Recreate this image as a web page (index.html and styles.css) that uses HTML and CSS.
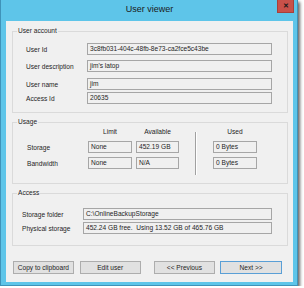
FILE: index.html
```html
<!DOCTYPE html>
<html lang="en">
<head>
    <meta charset="UTF-8">
    <title>User viewer</title>
    <link rel="stylesheet" href="styles.css">
</head>
<body>
    <div class="window">
        <div class="titlebar">
            <span class="title">User viewer</span>
            <span class="close">&#x2715;</span>
        </div>
        <div class="client">
            <!-- User account -->
            <fieldset class="group group-account">
                <legend>User account</legend>
                <div class="rows">
                    <div class="row"><span class="label">User Id</span><span class="field">3c8fb031-404c-48fb-8e73-ca2fce5c43be</span></div>
                    <div class="row"><span class="label">User description</span><span class="field">jim's latop</span></div>
                    <div class="row row-loose"><span class="label">User name</span><span class="field">jim</span></div>
                    <div class="row row-tight"><span class="label">Access Id</span><span class="field">20635</span></div>
                </div>
            </fieldset>
            <!-- Usage -->
            <fieldset class="group group-usage">
                <legend>Usage</legend>
                <div class="usage">
                    <span></span>
                    <span class="head">Limit</span>
                    <span class="head">Available</span>
                    <span class="sep"></span>
                    <span class="head">Used</span>
                    <span class="label">Storage</span>
                    <span class="field">None</span>
                    <span class="field">452.19 GB</span>
                    <span class="field">0 Bytes</span>
                    <span class="label">Bandwidth</span>
                    <span class="field">None</span>
                    <span class="field">N/A</span>
                    <span class="field">0 Bytes</span>
                </div>
            </fieldset>
            <!-- Access -->
            <fieldset class="group group-access">
                <legend>Access</legend>
                <div class="rows access">
                    <div class="row"><span class="label">Storage folder</span><span class="field">C:\OnlineBackupStorage</span></div>
                    <div class="row row-tight"><span class="label">Physical storage</span><span class="field">452.24 GB free.&nbsp; Using 13.52 GB of 465.76 GB</span></div>
                </div>
            </fieldset>
            <div class="buttons">
                <button class="btn">Copy to clipboard</button>
                <button class="btn">Edit user</button>
                <button class="btn btn-wide">&lt;&lt; Previous</button>
                <button class="btn btn-default">Next &gt;&gt;</button>
            </div>
        </div>
    </div>
</body>
</html>
```

FILE: styles.css
```css
body {
    margin: 0;
    background-color: #fff;
    font-family: "Liberation Sans", Arial, sans-serif;
    font-size: 6.6px;
    color: #1e1e1e;
}
.window {
    width: 298px;
    height: 286px;
    box-sizing: border-box;
    border: 1px solid #3f93b9;
    border-top: none;
    padding: 0 4px 3px 5px;
    background-color: #5ec5e9;
    box-shadow: 2px 2px 3px rgba(0, 0, 0, 0.6);
}
.titlebar {
    position: relative;
    height: 21px;
    text-align: center;
}
.title {
    display: inline-block;
    padding-top: 4px;
    font-size: 9px;
    color: #1a1a1a;
}
.close {
    position: absolute;
    top: 0;
    right: -1px;
    width: 17px;
    height: 13px;
    box-sizing: border-box;
    background-color: #c8514a;
    border: 1px solid #a8403a;
    border-top: none;
    color: #1a1a1a;
    font-size: 7px;
    font-weight: bold;
    line-height: 12px;
    text-align: center;
}
.client {
    height: 261px;
    box-sizing: border-box;
    background-color: #f0f0f0;
    padding: 6px 5px 0 6px;
    display: flex;
    flex-direction: column;
    gap: 5px;
}
.group {
    margin: 0;
    padding: 0;
    border: 1px solid #dadada;
    box-sizing: border-box;
    min-width: 0;
}
.group legend {
    margin-left: 4px;
    padding: 0 1px;
    line-height: 8px;
}
.group-account {
    height: 86px;
}
.group-usage {
    height: 66px;
}
.group-access {
    height: 57px;
}
.rows {
    display: flex;
    flex-direction: column;
    padding: 8px 0 0 13px;
}
.row {
    display: flex;
    align-items: center;
    margin-top: 5px;
}
.row:first-child {
    margin-top: 0;
}
.row-loose {
    margin-top: 6px;
}
.row-tight {
    margin-top: 2px;
}
.label {
    width: 61px;
    flex-shrink: 0;
}
.field {
    display: block;
    height: 12px;
    box-sizing: border-box;
    border: 1px solid #a6a6a6;
    background-color: #f0f0f0;
    padding-left: 2px;
    line-height: 10px;
    white-space: nowrap;
    overflow: hidden;
}
.rows .field {
    width: 185px;
}
.access {
    padding: 11px 0 0 9px;
}
.access .field {
    width: 189px;
}
.usage {
    display: grid;
    grid-template-columns: 57px 44px 43px 26px 44px;
    grid-template-rows: 11px 12px 12px;
    column-gap: 4px;
    row-gap: 4px;
    align-items: center;
    padding: 0 0 0 14px;
}
.usage .row-label {
    padding-top: 1px;
}
.head {
    text-align: center;
}
.sep {
    grid-row: 1 / 4;
    grid-column: 4;
    align-self: start;
    justify-self: center;
    width: 0;
    height: 43px;
    margin-top: 6px;
    border-left: 1px solid #a0a0a0;
    border-right: 1px solid #fff;
}
.usage .head:last-child,
.usage .field:nth-child(9),
.usage .field:nth-child(13) {
    grid-column: 5;
}
.usage .field:nth-child(8) {
    width: 43px;
}
.buttons {
    display: flex;
    margin-top: 10px;
    padding-left: 1px;
}
.btn {
    width: 62px;
    height: 13px;
    margin: 0 6px 0 0;
    padding: 0;
    border: 1px solid #adadad;
    background-color: #e1e1e1;
    font-family: "Liberation Sans", Arial, sans-serif;
    font-size: 6.6px;
    color: #1e1e1e;
}
.btn-wide {
    width: 63px;
    margin-left: 7px;
    margin-right: 5px;
}
.btn-default {
    width: 63px;
    border-color: #5a9fd6;
}
```
